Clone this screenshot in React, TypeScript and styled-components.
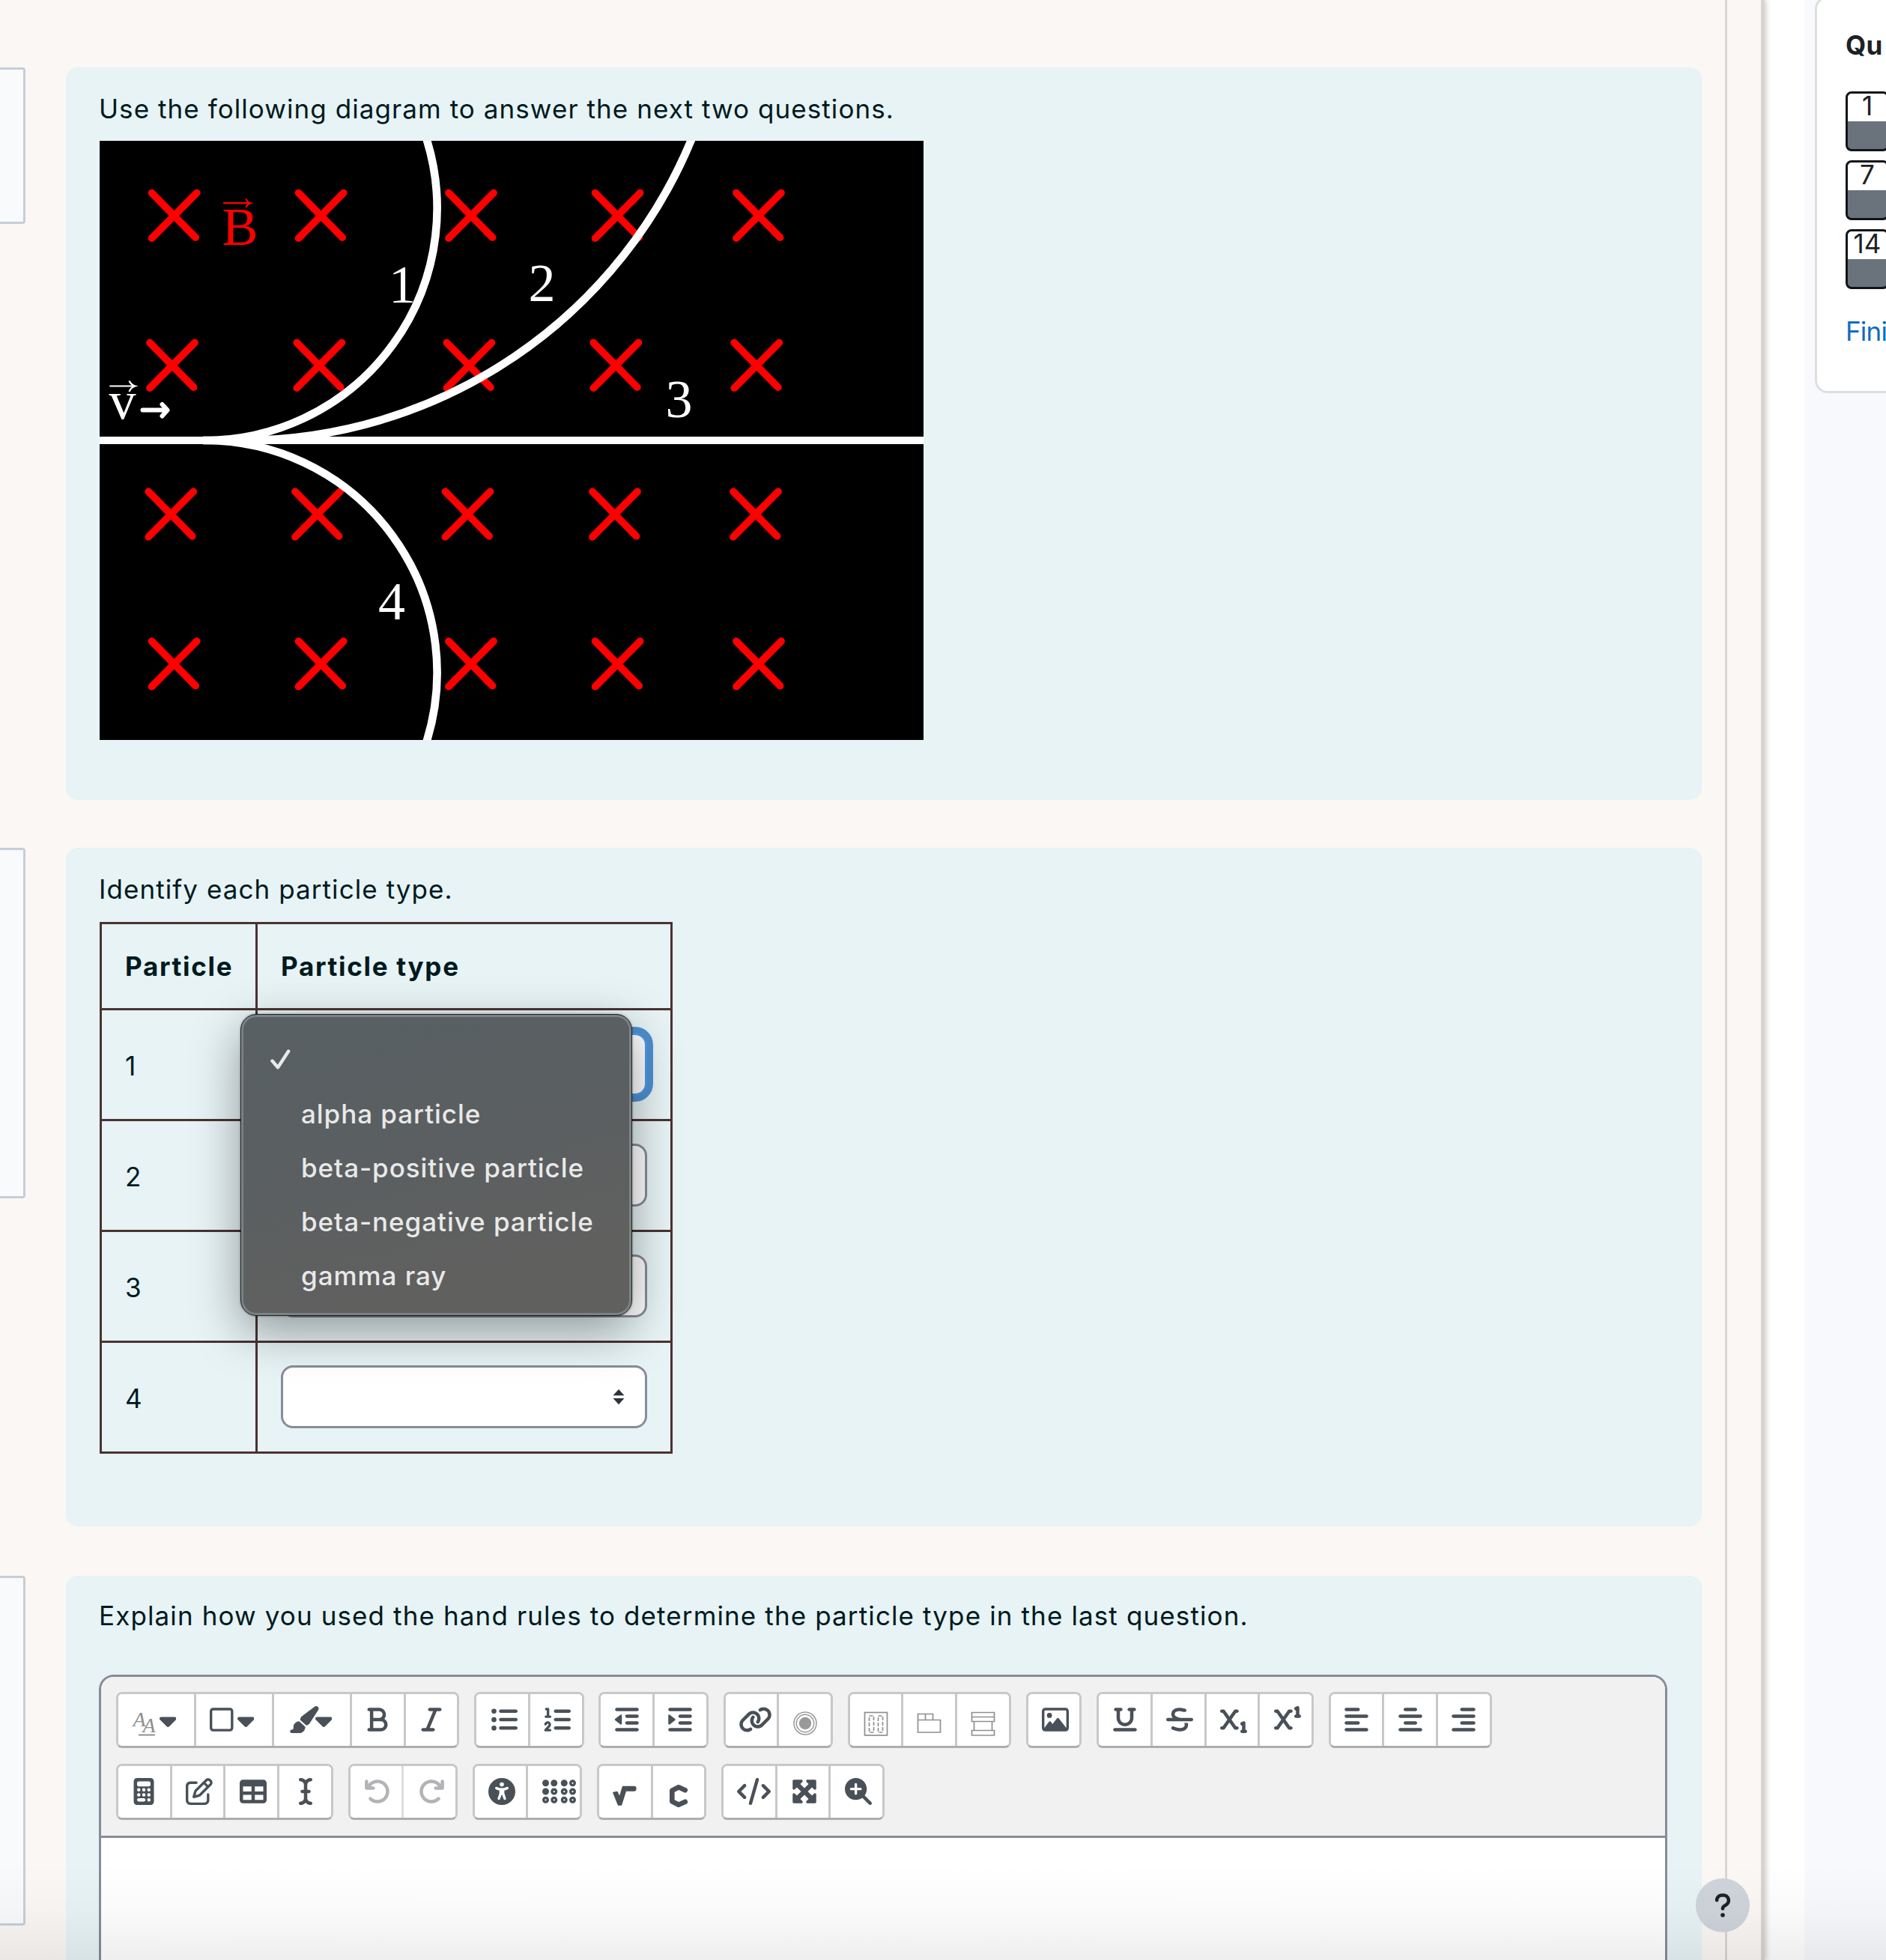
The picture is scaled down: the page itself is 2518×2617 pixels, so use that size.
import React from "react";
import styled, { createGlobalStyle, css } from "styled-components";
import type { IconType } from "react-icons";
import {
  FaAlignCenter,
  FaAlignLeft,
  FaAlignRight,
  FaArrowRotateLeft,
  FaArrowRotateRight,
  FaBold,
  FaBraille,
  FaCalculator,
  FaCaretDown,
  FaCode,
  FaICursor,
  FaIndent,
  FaItalic,
  FaLink,
  FaListOl,
  FaListUl,
  FaMagnifyingGlassPlus,
  FaMaximize,
  FaOutdent,
  FaPaintbrush,
  FaQuestion,
  FaRegImage,
  FaRegPenToSquare,
  FaRegSquare,
  FaStrikethrough,
  FaSubscript,
  FaSuperscript,
  FaTable,
  FaUnderline,
  FaUniversalAccess,
} from "react-icons/fa6";

const GlobalStyle = createGlobalStyle`
  *, *::before, *::after { box-sizing: border-box; }
  body {
    margin: 0;
    background: #fff;
    font-family: Inter, "Liberation Sans", sans-serif;
  }
`;

const ink = "#001a1e";
const iconInk = "#495057";

/* ---------- page shell ---------- */

const Page = styled.div`
  position: relative;
  display: flex;
  width: 2518px;
  height: 2617px;
  overflow: hidden;
  background: #fff;
  font-size: 35px;
`;

const Region = styled.main`
  display: flex;
  flex: none;
  width: 2356px;
  background: #fbf7f4;
  border-right: 5px solid #d8d4d1;
  box-shadow: 3px 0 6px rgba(0, 0, 0, 0.16);
`;

const Questions = styled.div`
  flex: none;
  width: 2306px;
  padding-top: 90px;
  border-right: 3px solid #dbd6d2;
`;

const QuestionRow = styled.section<{ $height: number; $gap: number }>`
  display: flex;
  align-items: flex-start;
  gap: 54px;
  height: ${(p) => p.$height}px;
  margin-bottom: ${(p) => p.$gap}px;
`;

const InfoBox = styled.div<{ $height: number }>`
  flex: none;
  width: 34px;
  height: ${(p) => p.$height}px;
  background: #f8fafc;
  border: 3px solid #c6ced8;
  border-left: 0;
  border-radius: 0 4px 4px 0;
`;

const Card = styled.div<{ $top?: number }>`
  width: 2184px;
  height: 100%;
  padding: ${(p) => p.$top ?? 28.5}px 44px 0;
  border-radius: 16px;
  background: #e7f3f5;
  color: ${ink};
`;

const Prompt = styled.p<{ $after: number; $tracking?: number }>`
  margin: 0 0 ${(p) => p.$after}px;
  line-height: 53px;
  letter-spacing: ${(p) => p.$tracking ?? 1.07}px;
  white-space: nowrap;
`;

/* ---------- particle diagram ---------- */

const DiagramSvg = styled.svg`
  display: block;
  margin-left: 0.6px;
`;

const crossRows = [
  { y: 69.6, xs: [69.6, 265.6, 466, 661.6, 850] },
  { y: 269.6, xs: [67, 263.3, 463.4, 659.3, 847.3] },
  { y: 468.4, xs: [65.2, 261, 461.5, 658, 846] },
  { y: 668.2, xs: [69.6, 265.6, 466, 661.6, 850] },
];

const labels = [
  { t: "1", x: 386, y: 215.5 },
  { t: "2", x: 572.5, y: 214 },
  { t: "3", x: 755.5, y: 369 },
  { t: "4", x: 372, y: 639 },
];

function Diagram() {
  return (
    <DiagramSvg width="1100" height="800" viewBox="0 0 1100 800">
      <rect width="1100" height="800" fill="#000" />
      <g stroke="#f00" strokeWidth="9.8" strokeLinecap="round" fill="none">
        {crossRows.map((r) =>
          r.xs.map((x) => (
            <path key={`${x}-${r.y}`} d={`M${x} ${r.y}l58.5 59.5M${x + 60} ${r.y}l-60 60.5`} />
          ))
        )}
      </g>
      <path d="M0 400H1100" stroke="#fff" strokeWidth="10" />
      <g stroke="#fff" strokeWidth="10.6" fill="none">
        <path d="M138 400A310 310 0 0 0 434 -10" />
        <path d="M190 400A650 650 0 0 0 793.500 -10" />
        <path d="M138 400A310 310 0 0 1 434 810" />
      </g>
      <g fill="#fff" fontFamily="'Liberation Serif', 'Times New Roman', serif" fontSize="72">
        {labels.map((l) => (
          <text key={l.t} x={l.x} y={l.y}>
            {l.t}
          </text>
        ))}
        <text x="12.500" y="370.500">v</text>
        <text x="163.500" y="138.800" fill="#f00">B</text>
      </g>
      <path d="M165 83.200H201M195.500 77.500Q197 82 201.500 83.200Q197 84.500 195.500 89" stroke="#f00" strokeWidth="2.200" fill="none" />
      <path d="M13.400 327.500H47.500M39.500 320.500Q42 326 47.500 327.500Q42 329 39.500 335" stroke="#fff" strokeWidth="2.200" fill="none" />
      <path d="M57.500 359.600H89M83.500 352L90.500 359.600L83.500 367.500" stroke="#fff" strokeWidth="6" strokeLinecap="round" strokeLinejoin="round" fill="none" />
    </DiagramSvg>
  );
}

/* ---------- answer table ---------- */

const Table = styled.table`
  width: 765px;
  margin-left: 1px;
  table-layout: fixed;
  border-collapse: collapse;
  border: 3px solid #4a3331;
`;

const cell = css`
  padding: 0 30px 0 31px;
  border: 3px solid #4a3331;
  text-align: left;
  vertical-align: middle;
`;

const Th = styled.th<{ $width: number }>`
  ${cell}
  width: ${(p) => p.$width}px;
  height: 115px;
  font-weight: 700;
  letter-spacing: 1.7px;
  white-space: nowrap;
`;

const Td = styled.td`
  ${cell}
  height: 148px;
`;

const NumberTd = styled(Td)`
  padding-top: 3px;
`;

const SelectWrap = styled.div`
  position: relative;
  width: 489px;
`;

const SelectBox = styled.div<{ $focused?: boolean }>`
  display: flex;
  align-items: center;
  justify-content: flex-end;
  height: 84px;
  padding-right: 27px;
  background: #fff;
  border: 3px solid #868e99;
  border-radius: 16px;
  ${(p) =>
    p.$focused &&
    css`
      border-color: #4d9bea;
      box-shadow: 0 0 0 8px #4f90d1;
    `}
`;

const Popup = styled.ul`
  position: absolute;
  z-index: 2;
  left: -54px;
  top: -25px;
  width: 523px;
  height: 403px;
  margin: 0;
  padding: 24px 0 0 80px;
  list-style: none;
  color: #e9e9e9;
  background: linear-gradient(165deg, #576063 0%, #5b5f61 45%, #60605f 80%);
  border: 1.5px solid #1d2122;
  border-radius: 21px;
  box-shadow: inset 0 0 0 3px #7c8284, 0 0 3px rgba(0, 0, 0, 0.45), 0 20px 64px rgba(0, 0, 0, 0.38);
`;

const Option = styled.li<{ $checked?: boolean }>`
  display: flex;
  align-items: center;
  height: 72px;
  margin-left: ${(p) => (p.$checked ? -41 : 0)}px;
  font-weight: 500;
  letter-spacing: 0.95px;
  white-space: nowrap;
`;

function SelectArrows() {
  return (
    <svg width="16" height="28" viewBox="0 0 16 28">
      <path d="M8 4L15.500 12.300H0.500ZM8 24.300L15.500 16H0.500Z" fill="#2b333c" />
    </svg>
  );
}

function Check() {
  return (
    <svg width="27" height="28" viewBox="0 0 27 28">
      <path d="M2.500 15.500L10 24.200L24.200 2.500" stroke="#e9e9e9" strokeWidth="4.400" strokeLinecap="round" strokeLinejoin="round" fill="none" />
    </svg>
  );
}

const options = ["alpha particle", "beta-positive particle", "beta-negative particle", "gamma ray"];

function ParticleTable() {
  return (
    <Table>
      <thead>
        <tr>
          <Th $width={208}>Particle</Th>
          <Th $width={554}>Particle type</Th>
        </tr>
      </thead>
      <tbody>
        {[1, 2, 3, 4].map((n) => (
          <tr key={n}>
            <NumberTd>{n}</NumberTd>
            <Td>
              <SelectWrap>
                <SelectBox $focused={n === 1}>
                  <SelectArrows />
                </SelectBox>
                {n === 1 && (
                  <Popup>
                    <Option $checked>
                      <Check />
                    </Option>
                    {options.map((o) => (
                      <Option key={o}>{o}</Option>
                    ))}
                  </Popup>
                )}
              </SelectWrap>
            </Td>
          </tr>
        ))}
      </tbody>
    </Table>
  );
}

/* ---------- editor ---------- */

const Editor = styled.div`
  width: 2094px;
  height: 420px;
  border: 3px solid #858d98;
  border-radius: 20px 20px 0 0;
  background: #fff;
  overflow: hidden;
`;

const Toolbar = styled.div`
  display: flex;
  flex-direction: column;
  gap: 20.5px;
  height: 215px;
  padding: 20px 0 0 20px;
  background: #f1f1f1;
  border-bottom: 3px solid #858d98;
`;

const ToolRow = styled.div`
  display: flex;
  gap: 19.9px;
`;

const Group = styled.div`
  display: flex;
  flex: none;
  height: 75.5px;
  overflow: hidden;
  background: #fff;
  border: 3px solid #c8c8c8;
  border-bottom-color: #adadad;
  border-radius: 8px;
`;

const ToolButton = styled.button<{ $disabled?: boolean }>`
  display: flex;
  align-items: center;
  justify-content: center;
  width: 71.67px;
  height: 100%;
  padding: 0;
  border: 0;
  border-left: 3px solid ${(p) => (p.$disabled ? "#dedede" : "#c8c8c8")};
  background: #fff;
  color: ${(p) => (p.$disabled ? "#b1b3b6" : iconInk)};
  font-size: 36px;

  &:first-child {
    width: 68.67px;
    border-left: 0;
  }
`;

const MenuButton = styled(ToolButton)`
  justify-content: flex-start;
  width: 104px;
  padding-left: 18px;

  &:first-child {
    width: 101px;
  }
`;

const IconSlot = styled.span<{ $shift?: number; $drop?: number; $wide?: number }>`
  display: flex;
  flex: none;
  margin-left: ${(p) => p.$shift ?? 0}px;
  padding-top: ${(p) => p.$drop ?? 0}px;

  & > svg {
    flex: none;
    ${(p) => p.$wide && `width: ${p.$wide}px; height: 36px;`}
  }
`;

const MenuSlot = styled(IconSlot)<{ $inset?: number }>`
  width: 36.5px;
  padding-left: ${(p) => p.$inset ?? 0}px;
`;

const CaretSlot = styled(IconSlot)`
  width: 22.5px;
  margin-top: 2px;
`;

const Caret = () => (
  <CaretSlot $wide={22.5}>
    <FaCaretDown />
  </CaretSlot>
);

const FontSizeIcon = () => (
  <svg width="36" height="46" viewBox="0 0 36 46">
    <g fill="#8f8f8f" fontFamily="'Liberation Serif', serif" fontStyle="italic" fontSize="28">
      <text x="1.500" y="31.500">A</text>
      <text x="14.500" y="40">A</text>
    </g>
    <path d="M9 43.500H31" stroke="#8f8f8f" strokeWidth="2" />
  </svg>
);

const RecordIcon = () => (
  <svg width="32" height="32" viewBox="0 0 32 32">
    <g fill="none" stroke="#999" strokeWidth="1.500">
      <circle cx="16" cy="16" r="15" />
      <circle cx="16" cy="16" r="11.700" />
    </g>
    <circle cx="16" cy="16" r="8.200" fill="#999" />
  </svg>
);

const GridIcon = () => (
  <svg width="33" height="33" viewBox="-1 -1 33 33">
    <g fill="none" stroke="#8f8f8f" strokeWidth="1.700">
      <rect x="0.500" y="0.500" width="30" height="30.500" />
      <path d="M6.500 5H12.500V27H6.500ZM18.500 5H24.500V27H18.500Z" strokeDasharray="5 2" />
    </g>
  </svg>
);

const TabsIcon = () => (
  <svg width="33" height="33" viewBox="-1 -1 33 33">
    <path d="M0.500 10.500H30.500V27H0.500ZM0.500 10.500V2.500H20.500V10.500M10.500 2.500V10.500" fill="none" stroke="#8f8f8f" strokeWidth="1.700" />
  </svg>
);

const AccordionIcon = () => (
  <svg width="33" height="33" viewBox="-1 -1 33 33">
    <path d="M0.500 0.500H30.500V12.500H0.500ZM0.500 6.500H30.500M3.500 12.500V24.500M27.500 12.500V24.500M0.500 24.500H30.500V31H0.500Z" fill="none" stroke="#8f8f8f" strokeWidth="1.700" />
  </svg>
);

const RootIcon = () => (
  <svg width="32" height="28" viewBox="0 0 32 28">
    <path d="M0.800 9.500L6 8.500L9.300 15.500L13.500 1.500H28.500Q31 1.500 31 4Q31 7 28.500 7H17.500L11.500 26H7.500Z" fill={iconInk} stroke={iconInk} strokeWidth="1.400" strokeLinejoin="round" />
  </svg>
);

const ChemIcon = () => (
  <svg width="26" height="32" viewBox="0 0 26 32">
    <path d="M21.800 8.200L13 4.200L4.300 8.700V23.300L13 27.800L21.800 23.800" fill="none" stroke={iconInk} strokeWidth="6.600" strokeLinejoin="round" strokeLinecap="round" />
  </svg>
);

type Tool = {
  icon: IconType | React.FC;
  shift?: number;
  drop?: number;
  wide?: number;
  disabled?: boolean;
};

const topGroups: Tool[][] = [
  [{ icon: FaListUl, shift: 4.5 }, { icon: FaListOl, shift: 4.5 }],
  [{ icon: FaOutdent }, { icon: FaIndent }],
  [{ icon: FaLink, shift: 12, wide: 45 }, { icon: RecordIcon, shift: 1, drop: 10 }],
  [
    { icon: GridIcon, drop: 10 },
    { icon: TabsIcon, drop: 10 },
    { icon: AccordionIcon, shift: 1, drop: 10 },
  ],
  [{ icon: FaRegImage, shift: 4 }],
  [
    { icon: FaUnderline },
    { icon: FaStrikethrough, shift: 4 },
    { icon: FaSubscript, shift: 4.5 },
    { icon: FaSuperscript, shift: 4.5 },
  ],
  [{ icon: FaAlignLeft }, { icon: FaAlignCenter }, { icon: FaAlignRight }],
];

const bottomGroups: Tool[][] = [
  [
    { icon: FaCalculator },
    { icon: FaRegPenToSquare, shift: 4.5 },
    { icon: FaTable, shift: 4.5 },
    { icon: FaICursor, shift: 1.5 },
  ],
  [
    { icon: FaArrowRotateLeft, shift: 3.5, disabled: true },
    { icon: FaArrowRotateRight, shift: 5, disabled: true },
  ],
  [{ icon: FaUniversalAccess, shift: 4.5 }, { icon: FaBraille, shift: 13, wide: 45 }],
  [{ icon: RootIcon, drop: 12 }, { icon: ChemIcon, drop: 12 }],
  [
    { icon: FaCode, shift: 13, wide: 45 },
    { icon: FaMaximize, shift: 4.5 },
    { icon: FaMagnifyingGlassPlus, shift: 4.5 },
  ],
];

function ToolGroup({ tools }: { tools: Tool[] }) {
  return (
    <Group>
      {tools.map(({ icon: Icon, shift, drop, wide, disabled }, i) => (
        <ToolButton key={i} $disabled={disabled}>
          <IconSlot $shift={shift} $drop={drop} $wide={wide}>
            <Icon />
          </IconSlot>
        </ToolButton>
      ))}
    </Group>
  );
}

function TextEditor() {
  return (
    <Editor>
      <Toolbar>
        <ToolRow>
          <Group>
            <MenuButton>
              <MenuSlot>
                <FontSizeIcon />
              </MenuSlot>
              <Caret />
            </MenuButton>
            <MenuButton>
              <MenuSlot $wide={31.5}>
                <FaRegSquare />
              </MenuSlot>
              <Caret />
            </MenuButton>
            <MenuButton>
              <MenuSlot $wide={40.5} $inset={1}>
                <FaPaintbrush />
              </MenuSlot>
              <Caret />
            </MenuButton>
            <ToolButton>
              <FaBold />
            </ToolButton>
            <ToolButton>
              <FaItalic />
            </ToolButton>
          </Group>
          {topGroups.map((g, i) => (
            <ToolGroup key={i} tools={g} />
          ))}
        </ToolRow>
        <ToolRow>
          {bottomGroups.map((g, i) => (
            <ToolGroup key={i} tools={g} />
          ))}
        </ToolRow>
      </Toolbar>
    </Editor>
  );
}

/* ---------- quiz navigation ---------- */

const Aside = styled.aside`
  flex: none;
  width: 109px;
  margin-left: 53px;
  background: #f8f9fc;
  overflow: hidden;
`;

const NavCard = styled.div`
  width: 300px;
  height: 530px;
  margin: -5px 0 0 14px;
  padding: 41px 0 0 38px;
  background: #fff;
  border: 3px solid #dedede;
  border-radius: 17px;
  color: #1d2125;
`;

const NavTitle = styled.h2`
  margin: 0 0 41px;
  font-size: 35px;
  font-weight: 700;
  line-height: 42px;
  letter-spacing: 0.4px;
`;

const NavList = styled.div`
  display: flex;
  flex-direction: column;
  gap: 12px;
`;

const NavButton = styled.a`
  width: 58px;
  height: 80px;
  border: 3px solid #10151a;
  border-radius: 8px;
  background: linear-gradient(#fff 0 37px, #6a737b 37px);
  font-size: 35px;
  line-height: 32px;
  text-align: center;
`;

const FinishLink = styled.a`
  display: block;
  margin-top: 35px;
  color: #0f6cbf;
  line-height: 42px;
  letter-spacing: -0.8px;
`;

/* ---------- overlays ---------- */

const BottomFade = styled.div`
  position: absolute;
  left: 0;
  right: 0;
  bottom: 0;
  height: 130px;
  background: linear-gradient(rgba(0, 0, 0, 0), rgba(0, 0, 0, 0.02) 50%, rgba(0, 0, 0, 0.065));
`;

const HelpButton = styled.button`
  position: absolute;
  left: 2264px;
  top: 2508px;
  display: flex;
  align-items: center;
  justify-content: center;
  width: 72px;
  height: 72px;
  padding: 0;
  border: 0;
  border-radius: 50%;
  background: #ced4da;
  color: #1d2125;
  font-size: 36px;
`;

export default function App() {
  return (
    <Page>
      <GlobalStyle />
      <Region>
        <Questions>
          <QuestionRow $height={977.5} $gap={64.5}>
            <InfoBox $height={209} />
            <Card>
              <Prompt $after={16}>Use the following diagram to answer the next two questions.</Prompt>
              <Diagram />
            </Card>
          </QuestionRow>
          <QuestionRow $height={905.5} $gap={66}>
            <InfoBox $height={467.5} />
            <Card>
              <Prompt $after={17}>Identify each particle type.</Prompt>
              <ParticleTable />
            </Card>
          </QuestionRow>
          <QuestionRow $height={560} $gap={0}>
            <InfoBox $height={467.5} />
            <Card $top={27}>
              <Prompt $after={52} $tracking={1.12}>
                Explain how you used the hand rules to determine the particle type in the last question.
              </Prompt>
              <TextEditor />
            </Card>
          </QuestionRow>
        </Questions>
      </Region>
      <Aside>
        <NavCard>
          <NavTitle>Qu</NavTitle>
          <NavList>
            <NavButton>1</NavButton>
            <NavButton>7</NavButton>
            <NavButton>14</NavButton>
          </NavList>
          <FinishLink>Fini</FinishLink>
        </NavCard>
      </Aside>
      <HelpButton>
        <FaQuestion />
      </HelpButton>
      <BottomFade />
    </Page>
  );
}
